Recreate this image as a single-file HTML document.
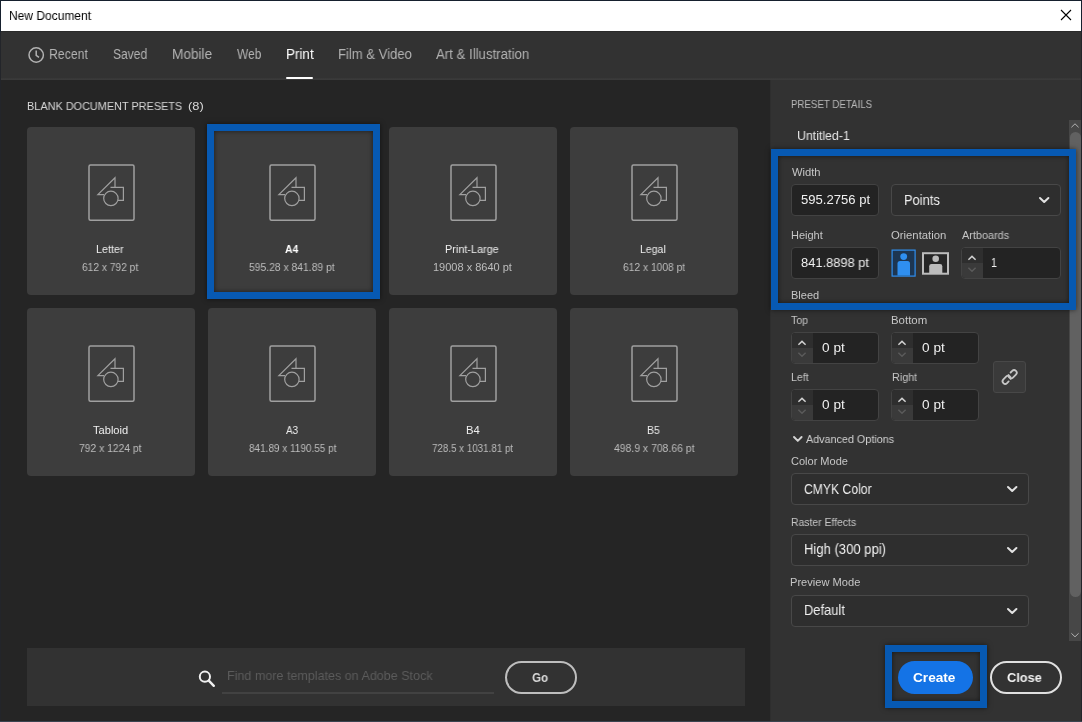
<!DOCTYPE html>
<html lang="en">
<head>
<meta charset="utf-8">
<title>New Document</title>
<style>
*{box-sizing:border-box;margin:0;padding:0}
html,body{width:1082px;height:722px;overflow:hidden;background:#252525}
body{position:relative;font-family:"Liberation Sans",sans-serif;color:#d2d2d2;font-size:12px}
.a,.t{position:absolute}
.t{white-space:nowrap;line-height:1;transform-origin:0 0;display:block;will-change:transform}
.card{position:absolute;width:168px;height:168px;background:#3d3d3d;border-radius:4px}
.card svg{position:absolute;left:60px;top:36px}
.inp{position:absolute;background:#232323;border:1px solid #424242;border-radius:4px}
.dd{position:absolute;background:#2e2e2e;border:1px solid #484848;border-radius:4px}
.dd svg{position:absolute;top:10.3px}
.sp{position:absolute;background:#232323;border:1px solid #434343;border-radius:4px;overflow:hidden}
.sp i{position:absolute;left:0;width:21px;height:15px}
.sp i.u{top:0;background:#2e2e2e}
.sp i.l{top:15px;background:#3a3a3a}
.sp svg{position:absolute;left:0;top:0}
.hl{position:absolute;border:7px solid #0759b2;box-shadow:0 0 5px rgba(0,0,0,.55),inset 0 0 5px rgba(0,0,0,.55)}
</style>
</head>
<body>
<div class="a" style="left:0;top:0;width:1082px;height:722px;background:#23252a"></div>
<div class="a" style="left:0;top:0;width:1082px;height:32px;background:#16202e"></div>
<div class="a" style="left:1px;top:1px;width:1080px;height:30px;background:#fff"></div>
<svg class="a" style="left:1058px;top:7px" width="16" height="16" viewBox="0 0 16 16"><path d="M3 3 L13 13 M13 3 L3 13" stroke="#000" stroke-width="1.1" fill="none"/></svg>
<div class="a" style="left:1px;top:31px;width:1080px;height:49px;background:#323232"></div>
<div class="a" style="left:1px;top:31px;width:1080px;height:1px;background:#2a2a2a"></div>
<div class="a" style="left:1px;top:78px;width:1080px;height:2px;background:linear-gradient(#363636,#3b3b3b)"></div>
<div class="a" style="left:1px;top:80px;width:770px;height:641px;background:#252525"></div>
<div class="a" style="left:770px;top:80px;width:311px;height:641px;background:#323232"></div>
<div class="a" style="left:770px;top:80px;width:1px;height:641px;background:#2e2e2e"></div>
<div class="a" style="left:0;top:721px;width:1082px;height:1px;background:#3a4450"></div>
<svg class="a" style="left:27px;top:45.5px" width="18" height="18" viewBox="0 0 18 18"><circle cx="9.2" cy="9" r="7.2" fill="none" stroke="#b2b2b2" stroke-width="1.5"/><path d="M9.2 4.6 V9.4 L12 11.4" fill="none" stroke="#b2b2b2" stroke-width="1.5"/></svg>
<div class="a" style="left:286px;top:77px;width:27px;height:2px;background:#fff;border-radius:1px"></div>
<div class="card" style="left:27px;top:127px"><svg width="48" height="59" viewBox="0 0 48 59"><rect x="2" y="2.1" width="45" height="55.2" rx="1.5" fill="none" stroke="#a0a0a0" stroke-width="1.5"/><path d="M28 24 V14.7 L10.9 31.6 H17" fill="none" stroke="#a0a0a0" stroke-width="1.2" stroke-linejoin="miter"/><path d="M23.5 24.4 H36.4 V37.4 H31" fill="none" stroke="#a0a0a0" stroke-width="1.2"/><circle cx="23.9" cy="35.4" r="7.2" fill="none" stroke="#a0a0a0" stroke-width="1.2"/></svg></div>
<div class="card" style="left:208px;top:127px"><svg width="48" height="59" viewBox="0 0 48 59"><rect x="2" y="2.1" width="45" height="55.2" rx="1.5" fill="none" stroke="#a0a0a0" stroke-width="1.5"/><path d="M28 24 V14.7 L10.9 31.6 H17" fill="none" stroke="#a0a0a0" stroke-width="1.2" stroke-linejoin="miter"/><path d="M23.5 24.4 H36.4 V37.4 H31" fill="none" stroke="#a0a0a0" stroke-width="1.2"/><circle cx="23.9" cy="35.4" r="7.2" fill="none" stroke="#a0a0a0" stroke-width="1.2"/></svg></div>
<div class="card" style="left:389px;top:127px"><svg width="48" height="59" viewBox="0 0 48 59"><rect x="2" y="2.1" width="45" height="55.2" rx="1.5" fill="none" stroke="#a0a0a0" stroke-width="1.5"/><path d="M28 24 V14.7 L10.9 31.6 H17" fill="none" stroke="#a0a0a0" stroke-width="1.2" stroke-linejoin="miter"/><path d="M23.5 24.4 H36.4 V37.4 H31" fill="none" stroke="#a0a0a0" stroke-width="1.2"/><circle cx="23.9" cy="35.4" r="7.2" fill="none" stroke="#a0a0a0" stroke-width="1.2"/></svg></div>
<div class="card" style="left:570px;top:127px"><svg width="48" height="59" viewBox="0 0 48 59"><rect x="2" y="2.1" width="45" height="55.2" rx="1.5" fill="none" stroke="#a0a0a0" stroke-width="1.5"/><path d="M28 24 V14.7 L10.9 31.6 H17" fill="none" stroke="#a0a0a0" stroke-width="1.2" stroke-linejoin="miter"/><path d="M23.5 24.4 H36.4 V37.4 H31" fill="none" stroke="#a0a0a0" stroke-width="1.2"/><circle cx="23.9" cy="35.4" r="7.2" fill="none" stroke="#a0a0a0" stroke-width="1.2"/></svg></div>
<div class="card" style="left:27px;top:308px"><svg width="48" height="59" viewBox="0 0 48 59"><rect x="2" y="2.1" width="45" height="55.2" rx="1.5" fill="none" stroke="#a0a0a0" stroke-width="1.5"/><path d="M28 24 V14.7 L10.9 31.6 H17" fill="none" stroke="#a0a0a0" stroke-width="1.2" stroke-linejoin="miter"/><path d="M23.5 24.4 H36.4 V37.4 H31" fill="none" stroke="#a0a0a0" stroke-width="1.2"/><circle cx="23.9" cy="35.4" r="7.2" fill="none" stroke="#a0a0a0" stroke-width="1.2"/></svg></div>
<div class="card" style="left:208px;top:308px"><svg width="48" height="59" viewBox="0 0 48 59"><rect x="2" y="2.1" width="45" height="55.2" rx="1.5" fill="none" stroke="#a0a0a0" stroke-width="1.5"/><path d="M28 24 V14.7 L10.9 31.6 H17" fill="none" stroke="#a0a0a0" stroke-width="1.2" stroke-linejoin="miter"/><path d="M23.5 24.4 H36.4 V37.4 H31" fill="none" stroke="#a0a0a0" stroke-width="1.2"/><circle cx="23.9" cy="35.4" r="7.2" fill="none" stroke="#a0a0a0" stroke-width="1.2"/></svg></div>
<div class="card" style="left:389px;top:308px"><svg width="48" height="59" viewBox="0 0 48 59"><rect x="2" y="2.1" width="45" height="55.2" rx="1.5" fill="none" stroke="#a0a0a0" stroke-width="1.5"/><path d="M28 24 V14.7 L10.9 31.6 H17" fill="none" stroke="#a0a0a0" stroke-width="1.2" stroke-linejoin="miter"/><path d="M23.5 24.4 H36.4 V37.4 H31" fill="none" stroke="#a0a0a0" stroke-width="1.2"/><circle cx="23.9" cy="35.4" r="7.2" fill="none" stroke="#a0a0a0" stroke-width="1.2"/></svg></div>
<div class="card" style="left:570px;top:308px"><svg width="48" height="59" viewBox="0 0 48 59"><rect x="2" y="2.1" width="45" height="55.2" rx="1.5" fill="none" stroke="#a0a0a0" stroke-width="1.5"/><path d="M28 24 V14.7 L10.9 31.6 H17" fill="none" stroke="#a0a0a0" stroke-width="1.2" stroke-linejoin="miter"/><path d="M23.5 24.4 H36.4 V37.4 H31" fill="none" stroke="#a0a0a0" stroke-width="1.2"/><circle cx="23.9" cy="35.4" r="7.2" fill="none" stroke="#a0a0a0" stroke-width="1.2"/></svg></div>
<div class="a" style="left:27px;top:648px;width:718px;height:58px;background:#323232"></div>
<svg class="a" style="left:195.6px;top:667.8px" width="22" height="22" viewBox="0 0 22 22"><circle cx="8.9" cy="8.7" r="5.1" fill="none" stroke="#f0f0f0" stroke-width="2"/><path d="M12.8 12.6 L17.8 17.8" stroke="#f0f0f0" stroke-width="2.4" stroke-linecap="round"/></svg>
<div class="a" style="left:222px;top:692px;width:272px;height:2px;background:#424242"></div>
<div class="a" style="left:505px;top:661px;width:72px;height:33px;border-radius:17px;border:2px solid #bebebe"></div>
<div class="inp" style="left:791px;top:184px;width:88px;height:32px"></div>
<div class="dd" style="left:891px;top:184px;width:170px;height:32px"><svg width="14" height="10" viewBox="0 0 14 10" style="left:145.0px"><path d="M3 3 L7.2 7 L11.4 3" fill="none" stroke="#e2e2e2" stroke-width="2" stroke-linecap="round" stroke-linejoin="round"/></svg></div>
<div class="inp" style="left:791px;top:247px;width:88px;height:32px"></div>
<svg class="a" style="left:891px;top:249px" width="60" height="28" viewBox="0 0 60 28">
<rect x="1.1" y="1.1" width="23" height="26" fill="#1d3652" stroke="#2f8ff0" stroke-width="1.2"/>
<circle cx="12.7" cy="7.6" r="3.4" fill="#2f8ff0"/>
<path d="M6.5 26.5 V14.5 Q6.5 12 9 12 H16.5 Q19 12 19 14.5 V26.5 Z" fill="#2f8ff0"/>
<rect x="32" y="4.2" width="25" height="20.5" fill="#262626" stroke="#bcbcbc" stroke-width="2"/>
<circle cx="44.7" cy="9.8" r="3.3" fill="#bcbcbc"/>
<path d="M38.2 24 V17.2 Q38.2 15 40.5 15 H49 Q51.3 15 51.3 17.2 V24 Z" fill="#bcbcbc"/>
</svg>
<div class="sp" style="left:961px;top:247px;width:100px;height:32px"><i class="u"></i><i class="l"></i><svg width="22" height="30" viewBox="0 0 22 30"><path d="M6.4 11.8 L10 8.4 L13.6 11.8" fill="none" stroke="#cecece" stroke-width="1.5"/><path d="M6.4 19.8 L10 23.2 L13.6 19.8" fill="none" stroke="#5a5a5a" stroke-width="1.5"/></svg></div>
<div class="sp" style="left:791px;top:332px;width:88px;height:32px"><i class="u"></i><i class="l"></i><svg width="22" height="30" viewBox="0 0 22 30"><path d="M6.4 11.8 L10 8.4 L13.6 11.8" fill="none" stroke="#cecece" stroke-width="1.5"/><path d="M6.4 19.8 L10 23.2 L13.6 19.8" fill="none" stroke="#5a5a5a" stroke-width="1.5"/></svg></div>
<div class="sp" style="left:891px;top:332px;width:88px;height:32px"><i class="u"></i><i class="l"></i><svg width="22" height="30" viewBox="0 0 22 30"><path d="M6.4 11.8 L10 8.4 L13.6 11.8" fill="none" stroke="#cecece" stroke-width="1.5"/><path d="M6.4 19.8 L10 23.2 L13.6 19.8" fill="none" stroke="#5a5a5a" stroke-width="1.5"/></svg></div>
<div class="sp" style="left:791px;top:389px;width:88px;height:32px"><i class="u"></i><i class="l"></i><svg width="22" height="30" viewBox="0 0 22 30"><path d="M6.4 11.8 L10 8.4 L13.6 11.8" fill="none" stroke="#cecece" stroke-width="1.5"/><path d="M6.4 19.8 L10 23.2 L13.6 19.8" fill="none" stroke="#5a5a5a" stroke-width="1.5"/></svg></div>
<div class="sp" style="left:891px;top:389px;width:88px;height:32px"><i class="u"></i><i class="l"></i><svg width="22" height="30" viewBox="0 0 22 30"><path d="M6.4 11.8 L10 8.4 L13.6 11.8" fill="none" stroke="#cecece" stroke-width="1.5"/><path d="M6.4 19.8 L10 23.2 L13.6 19.8" fill="none" stroke="#5a5a5a" stroke-width="1.5"/></svg></div>
<div class="a" style="left:993px;top:361px;width:33px;height:32px;background:#3a3a3a;border:1px solid #484848;border-radius:3px"></div>
<svg class="a" style="left:997px;top:365px" width="24" height="24" viewBox="0 0 24 24"><g fill="none" stroke="#c6c6c6" stroke-width="1.8" stroke-linecap="round"><path transform="translate(9.7 14.7) rotate(-45)" d="M0.2 2.6 H-2.1 A2.6 2.6 0 0 1 -2.1 -2.6 H2.1 A2.6 2.6 0 0 1 3.4 2.25"/><path transform="translate(15.6 9.2) rotate(-45)" d="M-0.2 -2.6 H2.1 A2.6 2.6 0 0 1 2.1 2.6 H-2.1 A2.6 2.6 0 0 1 -3.4 -2.25"/></g></svg>
<svg class="a" style="left:791px;top:434px" width="14" height="10" viewBox="0 0 14 10"><path d="M3 3 L6.8 6.9 L10.6 3" fill="none" stroke="#d4d4d4" stroke-width="1.9" stroke-linecap="round" stroke-linejoin="round"/></svg>
<div class="dd" style="left:791px;top:473px;width:238px;height:32px"><svg width="14" height="10" viewBox="0 0 14 10" style="left:212.6px"><path d="M3 3 L7.2 7 L11.4 3" fill="none" stroke="#e2e2e2" stroke-width="2" stroke-linecap="round" stroke-linejoin="round"/></svg></div>
<div class="dd" style="left:791px;top:534px;width:238px;height:32px"><svg width="14" height="10" viewBox="0 0 14 10" style="left:212.6px"><path d="M3 3 L7.2 7 L11.4 3" fill="none" stroke="#e2e2e2" stroke-width="2" stroke-linecap="round" stroke-linejoin="round"/></svg></div>
<div class="dd" style="left:791px;top:595px;width:238px;height:32px"><svg width="14" height="10" viewBox="0 0 14 10" style="left:212.6px"><path d="M3 3 L7.2 7 L11.4 3" fill="none" stroke="#e2e2e2" stroke-width="2" stroke-linecap="round" stroke-linejoin="round"/></svg></div>
<div class="a" style="left:1069px;top:120px;width:12px;height:521px;background:#474747"></div>
<div class="a" style="left:1069.5px;top:132px;width:11px;height:465px;background:#616161;border-radius:5.5px"></div>
<svg class="a" style="left:1069px;top:120px" width="12" height="12" viewBox="0 0 12 12"><path d="M2.4 7.3 L6 3.8 L9.6 7.3" fill="none" stroke="#b4b4b4" stroke-width="1"/></svg>
<svg class="a" style="left:1069px;top:629px" width="12" height="12" viewBox="0 0 12 12"><path d="M2.4 4.3 L6 7.8 L9.6 4.3" fill="none" stroke="#b4b4b4" stroke-width="1"/></svg>
<div class="hl" style="left:771px;top:149px;width:305px;height:161px"></div>
<div class="hl" style="left:207px;top:124px;width:173px;height:175px"></div>
<div class="hl" style="left:885px;top:645px;width:102px;height:63px"></div>
<div class="a" style="left:898px;top:661px;width:75px;height:33px;border-radius:17px;background:#1473e6"></div>
<div class="a" style="left:990px;top:661px;width:72px;height:33px;border-radius:17px;border:2px solid #e0e0e0"></div>
<span class="t" id="t0" style="left:9.40px;top:10.22px;font-size:12.5px;color:#000;transform:scaleX(0.9598)">New Document</span>
<span class="t" id="t1" style="left:49.30px;top:47.25px;font-size:14px;color:#b2b2b2;transform:scaleX(0.8752)">Recent</span>
<span class="t" id="t2" style="left:112.62px;top:47.25px;font-size:14px;color:#b2b2b2;transform:scaleX(0.8609)">Saved</span>
<span class="t" id="t3" style="left:172.11px;top:47.25px;font-size:14px;color:#b2b2b2;transform:scaleX(0.9732)">Mobile</span>
<span class="t" id="t4" style="left:236.91px;top:47.25px;font-size:14px;color:#b2b2b2;transform:scaleX(0.8543)">Web</span>
<span class="t" id="t5" style="left:286.20px;top:47.25px;font-size:14px;color:#ffffff;transform:scaleX(0.9588)">Print</span>
<span class="t" id="t6" style="left:337.62px;top:47.25px;font-size:14px;color:#b2b2b2;transform:scaleX(0.9342)">Film &amp; Video</span>
<span class="t" id="t7" style="left:436.34px;top:47.25px;font-size:14px;color:#b2b2b2;transform:scaleX(0.9434)">Art &amp; Illustration</span>
<span class="t" id="t8" style="left:27.02px;top:100.69px;font-size:11px;color:#d8d8d8;transform:scaleX(0.9894)">BLANK DOCUMENT PRESETS</span>
<span class="t" id="t9" style="left:187.61px;top:100.69px;font-size:11px;color:#d8d8d8;transform:scaleX(1.1647)">(8)</span>
<span class="t" id="t10" style="left:96.44px;top:243.69px;font-size:11px;color:#eeeeee;transform:scaleX(0.9820)">Letter</span>
<span class="t" id="t11" style="left:82.36px;top:261.79px;font-size:11px;color:#bdbdbd;transform:scaleX(0.9280)">612 x 792 pt</span>
<span class="t" id="t12" style="left:285.33px;top:243.69px;font-size:11px;color:#ffffff;font-weight:bold;transform:scaleX(0.9445)">A4</span>
<span class="t" id="t13" style="left:249.15px;top:261.79px;font-size:11px;color:#bdbdbd;transform:scaleX(0.9397)">595.28 x 841.89 pt</span>
<span class="t" id="t14" style="left:445.42px;top:243.69px;font-size:11px;color:#eeeeee;transform:scaleX(0.9873)">Print-Large</span>
<span class="t" id="t15" style="left:433.38px;top:261.79px;font-size:11px;color:#bdbdbd;transform:scaleX(0.9949)">19008 x 8640 pt</span>
<span class="t" id="t16" style="left:640.45px;top:243.69px;font-size:11px;color:#eeeeee;transform:scaleX(0.9582)">Legal</span>
<span class="t" id="t17" style="left:622.82px;top:261.79px;font-size:11px;color:#bdbdbd;transform:scaleX(0.9324)">612 x 1008 pt</span>
<span class="t" id="t18" style="left:93.40px;top:424.69px;font-size:11px;color:#eeeeee;transform:scaleX(1.0085)">Tabloid</span>
<span class="t" id="t19" style="left:79.08px;top:442.79px;font-size:11px;color:#bdbdbd;transform:scaleX(0.9384)">792 x 1224 pt</span>
<span class="t" id="t20" style="left:286.41px;top:424.69px;font-size:11px;color:#eeeeee;transform:scaleX(0.9036)">A3</span>
<span class="t" id="t21" style="left:248.57px;top:442.79px;font-size:11px;color:#bdbdbd;transform:scaleX(0.9065)">841.89 x 1190.55 pt</span>
<span class="t" id="t22" style="left:465.64px;top:424.69px;font-size:11px;color:#eeeeee;transform:scaleX(1.0274)">B4</span>
<span class="t" id="t23" style="left:432.16px;top:442.79px;font-size:11px;color:#bdbdbd;transform:scaleX(0.8897)">728.5 x 1031.81 pt</span>
<span class="t" id="t24" style="left:647.43px;top:424.69px;font-size:11px;color:#eeeeee;transform:scaleX(0.9545)">B5</span>
<span class="t" id="t25" style="left:613.76px;top:442.79px;font-size:11px;color:#bdbdbd;transform:scaleX(0.9466)">498.9 x 708.66 pt</span>
<span class="t" id="t26" style="left:791.11px;top:98.79px;font-size:11px;color:#b8b8b8;transform:scaleX(0.8828)">PRESET DETAILS</span>
<span class="t" id="t27" style="left:797.43px;top:128.90px;font-size:13px;color:#e8e8e8;transform:scaleX(0.9493)">Untitled-1</span>
<span class="t" id="t28" style="left:791.99px;top:166.69px;font-size:11px;color:#c6c6c6;transform:scaleX(1.0156)">Width</span>
<span class="t" id="t29" style="left:800.78px;top:193.30px;font-size:13px;color:#f0f0f0;transform:scaleX(1.0056)">595.2756 pt</span>
<span class="t" id="t30" style="left:903.77px;top:192.85px;font-size:14px;color:#f0f0f0;transform:scaleX(0.9189)">Points</span>
<span class="t" id="t31" style="left:790.51px;top:229.69px;font-size:11px;color:#c6c6c6;transform:scaleX(0.9889)">Height</span>
<span class="t" id="t32" style="left:891.40px;top:229.69px;font-size:11px;color:#c6c6c6;transform:scaleX(1.0285)">Orientation</span>
<span class="t" id="t33" style="left:961.93px;top:229.69px;font-size:11px;color:#c6c6c6;transform:scaleX(0.9875)">Artboards</span>
<span class="t" id="t34" style="left:801.35px;top:256.30px;font-size:13px;color:#f0f0f0;transform:scaleX(0.9904)">841.8898 pt</span>
<span class="t" id="t35" style="left:990.95px;top:256.30px;font-size:13px;color:#f0f0f0;transform:scaleX(0.8200)">1</span>
<span class="t" id="t36" style="left:790.54px;top:289.59px;font-size:11px;color:#c6c6c6;transform:scaleX(0.9884)">Bleed</span>
<span class="t" id="t37" style="left:791.40px;top:314.79px;font-size:11px;color:#c6c6c6;transform:scaleX(0.9655)">Top</span>
<span class="t" id="t38" style="left:891.49px;top:314.79px;font-size:11px;color:#c6c6c6;transform:scaleX(1.0378)">Bottom</span>
<span class="t" id="t39" style="left:821.51px;top:341.00px;font-size:13px;color:#f0f0f0;transform:scaleX(1.0495)">0 pt</span>
<span class="t" id="t40" style="left:921.51px;top:341.00px;font-size:13px;color:#f0f0f0;transform:scaleX(1.0495)">0 pt</span>
<span class="t" id="t41" style="left:790.56px;top:372.49px;font-size:11px;color:#c6c6c6;transform:scaleX(0.9680)">Left</span>
<span class="t" id="t42" style="left:891.55px;top:372.49px;font-size:11px;color:#c6c6c6;transform:scaleX(0.9789)">Right</span>
<span class="t" id="t43" style="left:821.51px;top:398.00px;font-size:13px;color:#f0f0f0;transform:scaleX(1.0495)">0 pt</span>
<span class="t" id="t44" style="left:921.51px;top:398.00px;font-size:13px;color:#f0f0f0;transform:scaleX(1.0495)">0 pt</span>
<span class="t" id="t45" style="left:806.42px;top:434.17px;font-size:11.5px;color:#d0d0d0;transform:scaleX(0.9375)">Advanced Options</span>
<span class="t" id="t46" style="left:790.84px;top:456.49px;font-size:11px;color:#c6c6c6;transform:scaleX(1.0010)">Color Mode</span>
<span class="t" id="t47" style="left:803.98px;top:482.25px;font-size:14px;color:#f0f0f0;transform:scaleX(0.8691)">CMYK Color</span>
<span class="t" id="t48" style="left:790.57px;top:516.69px;font-size:11px;color:#c6c6c6;transform:scaleX(0.9451)">Raster Effects</span>
<span class="t" id="t49" style="left:804.19px;top:541.55px;font-size:14px;color:#f0f0f0;transform:scaleX(0.9323)">High (300 ppi)</span>
<span class="t" id="t50" style="left:790.48px;top:576.79px;font-size:11px;color:#c6c6c6;transform:scaleX(1.0094)">Preview Mode</span>
<span class="t" id="t51" style="left:804.25px;top:603.15px;font-size:14px;color:#f0f0f0;transform:scaleX(0.9222)">Default</span>
<span class="t" id="t52" style="left:913.43px;top:670.80px;font-size:13px;color:#ffffff;font-weight:bold;transform:scaleX(1.0476)">Create</span>
<span class="t" id="t53" style="left:1006.98px;top:670.70px;font-size:13px;color:#f2f2f2;font-weight:bold;transform:scaleX(0.9800)">Close</span>
<span class="t" id="t54" style="left:227.26px;top:669.00px;font-size:13px;color:#5c5c5c;transform:scaleX(0.9642)">Find more templates on Adobe Stock</span>
<span class="t" id="t55" style="left:531.96px;top:670.90px;font-size:13px;color:#dadada;font-weight:bold;transform:scaleX(0.8992)">Go</span>
</body>
</html>
